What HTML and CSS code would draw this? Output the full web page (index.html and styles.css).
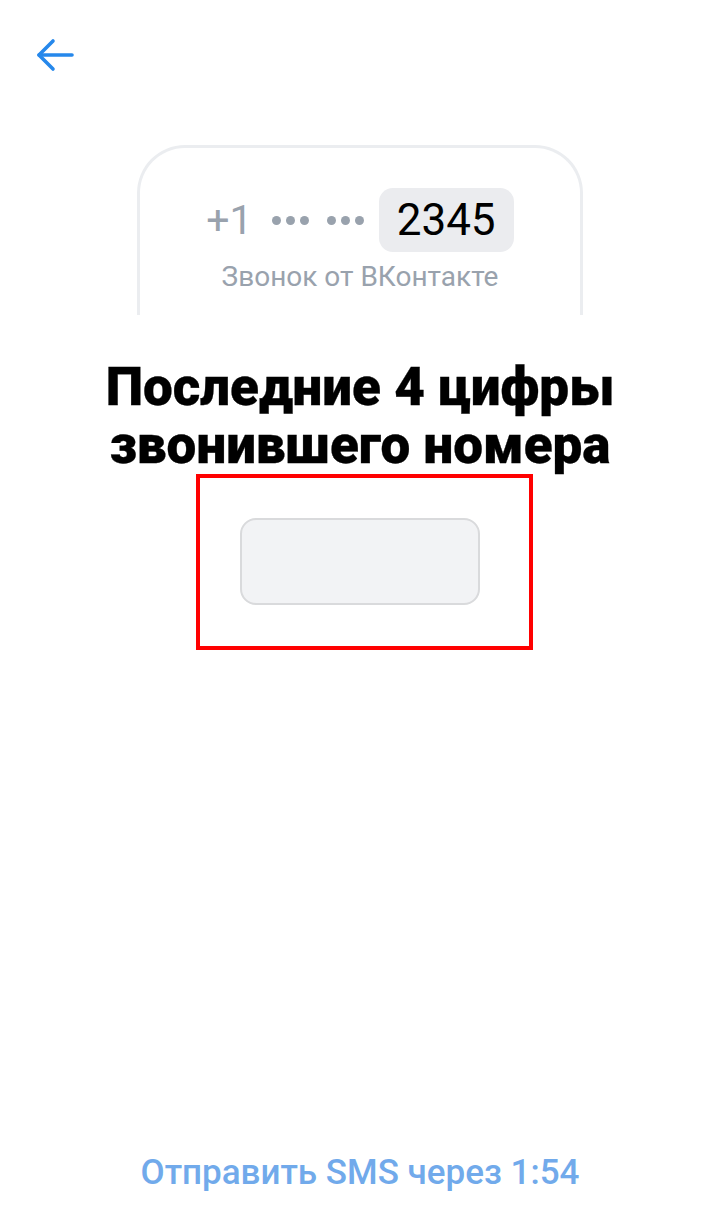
FILE: index.html
```html
<!DOCTYPE html>
<html>
    <head>
        <title>Подтверждение звонком</title>
        <link rel="stylesheet" href="styles.css">
    </head>
    <body>
        <div class="screen">
            <div class="topbar">
                <button class="back" type="button" aria-label="Назад">
                    <svg width="38" height="34" viewBox="0 0 38 34" fill="none" stroke="#2688eb" stroke-width="3.6" stroke-linecap="round" stroke-linejoin="round">
                        <path d="M3 17 H36"/>
                        <path d="M17 3 L3 17 L17 31"/>
                    </svg>
                </button>
            </div>

            <div class="phone-card">
                <div class="number-row">
                    <span class="prefix">+1</span>
                    <span class="dots"><i></i><i></i><i></i></span>
                    <span class="dots"><i></i><i></i><i></i></span>
                    <span class="last-digits">2345</span>
                </div>
                <div class="caller">Звонок от ВКонтакте</div>
            </div>

            <h1 class="title">Последние 4 цифры<br>звонившего номера</h1>

            <div class="code-frame">
                <input class="code-input" type="text" maxlength="4" inputmode="numeric">
            </div>

            <div class="resend">Отправить SMS через 1:54</div>
        </div>
    </body>
</html>
```

FILE: styles.css
```css
body {
  margin: 0;
  background: #fff;
  font-family: Roboto, "Noto Sans", sans-serif;
}
.screen {
  height: 1228px;
  display: flex;
  flex-direction: column;
  align-items: center;
}
.topbar {
  align-self: stretch;
  height: 145px;
}
.back {
  margin: 38px 0 0 36px;
  padding: 0;
  border: none;
  background: none;
  display: block;
  cursor: pointer;
}
.phone-card {
  box-sizing: border-box;
  width: 446px;
  height: 170px;
  padding-top: 40px;
  border: 3px solid #ebedf0;
  border-bottom: none;
  border-radius: 48px 48px 0 0;
  display: flex;
  flex-direction: column;
  align-items: center;
}
.number-row {
  display: flex;
  align-items: center;
  gap: 18px;
  color: #99a2ad;
}
.prefix {
  font-size: 41px;
  line-height: 48px;
  margin-right: 1px;
}
.dots {
  display: flex;
  gap: 5px;
}
.dots i {
  width: 9px;
  height: 9px;
  border-radius: 50%;
  background: #99a2ad;
}
.last-digits {
  box-sizing: border-box;
  height: 64px;
  width: 135px;
  margin-left: -3px;
  border-radius: 14px;
  background: #ebecef;
  color: #000;
  font-size: 44px;
  line-height: 64px;
  text-align: center;
}
.caller {
  margin-top: 8px;
  font-size: 28px;
  line-height: 34px;
  color: #99a2ad;
}
.title {
  margin: 43px 0 0;
  font-size: 53px;
  line-height: 58px;
  font-weight: 900;
  color: #000;
  -webkit-text-stroke: 0.3px #000;
  text-align: center;
}
.code-frame {
  margin: 0 0 0 9px;
  padding: 40px 49px 41px 40px;
  border: 4px solid #ff0000;
}
.code-input {
  box-sizing: border-box;
  display: block;
  width: 240px;
  height: 87px;
  border: 2px solid #d9dadc;
  border-radius: 16px;
  background: #f2f3f5;
  font-family: inherit;
  font-size: 40px;
  text-align: center;
  outline: none;
}
.resend {
  margin-top: auto;
  padding-bottom: 35px;
  font-size: 35px;
  line-height: 40px;
  font-weight: 500;
  color: #71aaeb;
}
```
